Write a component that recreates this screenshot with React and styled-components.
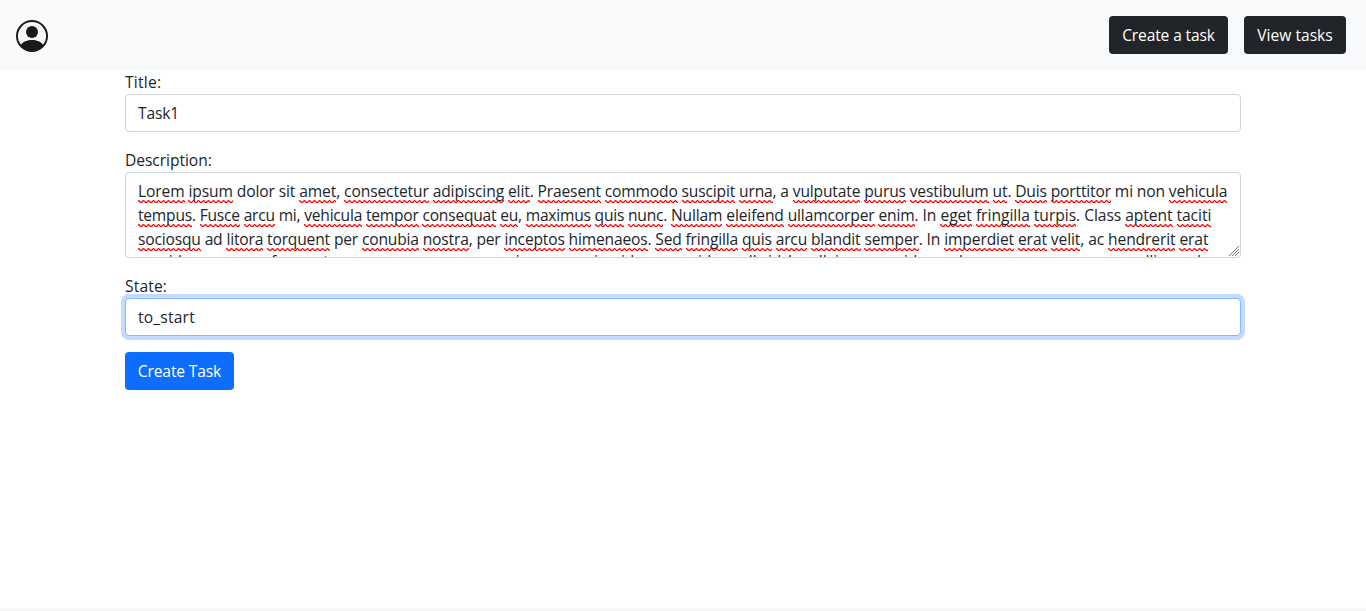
import React from "react";
import styled, { createGlobalStyle, css } from "styled-components";

const Global = createGlobalStyle`
  *, *::before, *::after { box-sizing: border-box; }
  body {
    margin: 0;
    background: #fff;
    color: #212529;
    font: 400 15.6px/24px "Open Sans", "Noto Sans", sans-serif;
    letter-spacing: -0.14px;
  }
`;

const Page = styled.div`
  display: flex;
  flex-direction: column;
  height: 611px;
  overflow: hidden;
`;

const Navbar = styled.header`
  display: flex;
  align-items: center;
  justify-content: space-between;
  flex: none;
  height: 70px;
  padding: 0 20px 0 16px;
  background: #f8f9fb;
`;

const Brand = styled.a`
  display: flex;
  padding-top: 2px;
  color: rgba(0, 0, 0, 0.9);
`;

const Actions = styled.nav`
  display: flex;
  gap: 16px;
`;

const Button = styled.button`
  width: ${(p) => p.$width}px;
  height: 38px;
  padding: 0 0 1px;
  border: 0;
  border-radius: 4px;
  background: ${(p) => (p.$primary ? "#0d6efd" : "#212529")};
  color: #fff;
  font: inherit;
  letter-spacing: ${(p) => p.$spacing ?? -0.14}px;
  white-space: nowrap;
`;

const Form = styled.form`
  display: flex;
  flex-direction: column;
  align-items: flex-start;
  gap: 16px;
  width: 1116px;
  margin-left: 125px;
  flex: 1;
`;

const Field = styled.div`
  display: flex;
  flex-direction: column;
  width: 100%;
`;

const Label = styled.label`
  height: 24px;
  letter-spacing: ${(p) => p.$spacing ?? -0.05}px;
`;

const control = css`
  border: 1px solid #ced4da;
  border-radius: 4px;
  background: #fff;
  color: #212529;
  font: inherit;
  letter-spacing: inherit;
`;

const Input = styled.input`
  ${control}
  height: 38px;
  padding: 0 12px 1px;
  outline: 0;
  letter-spacing: ${(p) => p.$spacing ?? -0.14}px;
  ${(p) =>
    p.$focused &&
    css`
      border-color: #86b7fe;
      box-shadow: 0 0 0 4px rgba(13, 110, 253, 0.25);
    `}
`;

const TextArea = styled.div`
  ${control}
  position: relative;
  height: 86px;
  padding: 6px 12px 0;
  overflow: hidden;
`;

const Grip = styled.svg`
  position: absolute;
  right: 0;
  bottom: 0;
`;

const Line = styled.div`
  height: 24px;
  white-space: pre;
`;

const Chunk = styled.span`
  letter-spacing: ${(p) => p.$spacing}px;
`;

const Misspelled = styled.span`
  padding-bottom: 1px;
  background:
    linear-gradient(90deg, #f00 0 1px, #ff000066 1px 2px, transparent 2px 4px, #ff000066 4px) 0 calc(100% - 2px) / 5px 1px repeat-x,
    linear-gradient(90deg, #ff000088 0 1px, #f00 1px 2px, #ff000066 2px 4px, #f00 4px) 0 calc(100% - 1px) / 5px 1px repeat-x,
    linear-gradient(90deg, transparent 0 1px, #ff000066 1px 2px, #f00 2px 4px, #ff000066 4px) 0 100% / 5px 1px repeat-x;
`;

const ScrolledLine = styled.div`
  display: flex;
  height: 24px;
  margin-top: -2px;
`;

const Piece = styled.span`
  flex: none;
  width: ${(p) => p.$width}px;
  white-space: nowrap;
`;

const BottomShade = styled.div`
  height: 4px;
  flex: none;
  background: linear-gradient(#fefefe, #f2f2f2);
`;

// Each line is a list of [letter spacing, text] runs.
const lines = [
  [
    [-0.115, "Lorem ipsum dolor sit amet, consectetur adipiscing elit. "],
    [-0.16, "Praesent commodo suscipit urna, a vulputate purus vestibulum ut. Duis porttitor mi non vehicula"],
  ],
  [
    [-0.225, "tempus. Fusce arcu mi, vehicula tempor consequat eu, maximus quis nunc. "],
    [-0.14, "Nullam eleifend ullamcorper enim. "],
    [-0.02, "In eget fringilla turpis. "],
    [-0.06, "Class aptent taciti"],
  ],
  [
    [-0.175, "sociosqu ad litora torquent per conubia nostra, per inceptos himenaeos. "],
    [-0.17, "Sed fringilla quis arcu blandit semper. "],
    [-0.11, "In imperdiet erat velit, ac hendrerit erat"],
  ],
];

const known = new Set(["dolor", "sit", "a", "mi", "non", "In", "Class", "ad", "per", "ac"]);

// The partly scrolled fourth line, as [advance, words].
const scrolled = [
  [133, "gravida nec purus"],
  [226, "fermentum accumsan a"],
  [79, "quis nunc"],
  [45, "enim"],
  [34, "id"],
  [43, "una"],
  [32, "id"],
  [38, "nulla"],
  [20, "id"],
  [12, "l"],
  [35, "nulla"],
  [69, "in a nunc"],
  [24, "id"],
  [31, "ac"],
  [163, "la purus nec eros"],
  [61, "mollis"],
  [30, "ad"],
];

function Checked({ text }) {
  return text
    .split(/([A-Za-z]+)/)
    .map((part, i) => (/^[A-Za-z]/.test(part) && !known.has(part) ? <Misspelled key={i}>{part}</Misspelled> : part));
}

function PersonCircle() {
  return (
    <svg width="32" height="32" viewBox="0 0 16 16" fill="currentColor">
      <path d="M11 6a3 3 0 1 1-6 0 3 3 0 0 1 6 0z" />
      <path
        fillRule="evenodd"
        d="M0 8a8 8 0 1 1 16 0A8 8 0 0 1 0 8zm8-7a7 7 0 0 0-5.468 11.37C3.242 11.226 4.805 10 8 10s4.757 1.225 5.468 2.37A7 7 0 0 0 8 1z"
      />
    </svg>
  );
}

export default function App() {
  return (
    <Page>
      <Global />
      <Navbar>
        <Brand>
          <PersonCircle />
        </Brand>
        <Actions>
          <Button $width={119}>Create a task</Button>
          <Button $width={102} $spacing={0}>View tasks</Button>
        </Actions>
      </Navbar>
      <Form>
        <Field>
          <Label $spacing={0.25}>Title:</Label>
          <Input defaultValue="Task1" />
        </Field>
        <Field>
          <Label>Description:</Label>
          <TextArea>
            {lines.map((runs, i) => (
              <Line key={i}>
                {runs.map(([spacing, text]) => (
                  <Chunk key={text} $spacing={spacing}>
                    <Checked text={text} />
                  </Chunk>
                ))}
              </Line>
            ))}
            <ScrolledLine>
              {scrolled.map(([width, text], i) => (
                <Piece key={i} $width={width}>
                  {text}
                </Piece>
              ))}
            </ScrolledLine>
            <Grip width="12" height="12" viewBox="0 0 12 12" stroke="#777" strokeWidth="1">
              <path d="M1 11L11 1M4 11L11 4M7 11L11 7" />
            </Grip>
          </TextArea>
        </Field>
        <Field>
          <Label $spacing={0.15}>State:</Label>
          <Input $focused $spacing={0.2} defaultValue="to_start" />
        </Field>
        <Button type="button" $primary $width={109}>
          Create Task
        </Button>
      </Form>
      <BottomShade />
    </Page>
  );
}
